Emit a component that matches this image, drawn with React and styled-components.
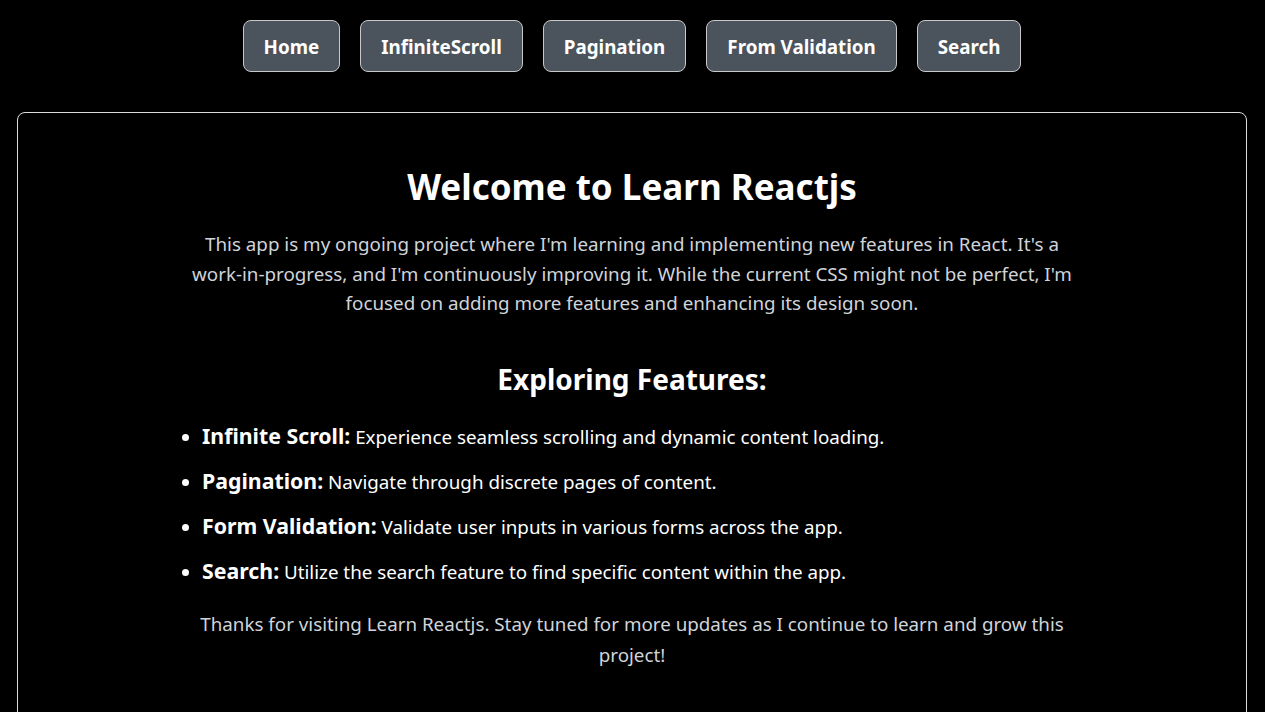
import React from "react";
import styled, { createGlobalStyle } from "styled-components";

const GlobalStyle = createGlobalStyle`
  * {
    box-sizing: border-box;
  }

  body {
    margin: 0;
    background-color: #000;
    color: #fff;
    font-family: "Noto Sans", "Open Sans", sans-serif;
  }
`;

const links = ["Home", "InfiniteScroll", "Pagination", "From Validation", "Search"];

const features = [
  {
    title: "Infinite Scroll:",
    text: "Experience seamless scrolling and dynamic content loading.",
  },
  {
    title: "Pagination:",
    text: "Navigate through discrete pages of content.",
  },
  {
    title: "Form Validation:",
    text: "Validate user inputs in various forms across the app.",
  },
  {
    title: "Search:",
    text: "Utilize the search feature to find specific content within the app.",
  },
];

const App = () => {
  return (
    <>
      <GlobalStyle />
      <Page>
        <Nav>
          {links.map((link) => (
            <NavButton key={link}>{link}</NavButton>
          ))}
        </Nav>

        <Card>
          <Title>Welcome to Learn Reactjs</Title>
          <Intro>
            This app is my ongoing project where I'm learning and implementing
            new features in React. It's a work-in-progress, and I'm
            continuously improving it. While the current CSS might not be
            perfect, I'm focused on adding more features and enhancing its
            design soon.
          </Intro>

          <SubTitle>Exploring Features:</SubTitle>
          <FeatureList>
            {features.map((item) => (
              <FeatureItem key={item.title}>
                <FeatureName>{item.title}</FeatureName> {item.text}
              </FeatureItem>
            ))}
          </FeatureList>

          <Outro>
            Thanks for visiting Learn Reactjs. Stay tuned for more updates as I
            continue to learn and grow this project!
          </Outro>
        </Card>
      </Page>
    </>
  );
};

export default App;

const Page = styled.div`
  padding: 20px 18px 0 17px;
`;

const Nav = styled.nav`
  display: flex;
  justify-content: center;
  gap: 20px;
`;

const NavButton = styled.button`
  height: 52px;
  padding: 2px 20px 0;
  background-color: #4b535c;
  border: 1px solid #c8c8c8;
  border-radius: 8px;
  color: #fff;
  font-family: inherit;
  font-size: 18.8px;
  font-weight: 700;
  cursor: pointer;
`;

const Card = styled.main`
  margin-top: 40px;
  min-height: 640px;
  padding: 50px 20px 30px;
  border: 1px solid #dcdcdc;
  border-radius: 8px;
  text-align: center;
`;

const Title = styled.h1`
  margin: 0 0 20px;
  font-size: 35px;
  font-weight: 700;
`;

const Intro = styled.p`
  max-width: 895px;
  margin: 0 auto;
  color: #d0d4da;
  font-size: 18.8px;
  line-height: 29.5px;
`;

const SubTitle = styled.h2`
  margin: 41px 0 21px;
  font-size: 28px;
  font-weight: 700;
`;

const FeatureList = styled.ul`
  margin: 0;
  padding: 0 0 0 164px;
  text-align: left;
`;

const FeatureItem = styled.li`
  margin-bottom: 10px;
  font-size: 18.8px;
  line-height: 33px;
`;

const FeatureName = styled.strong`
  font-size: 21.3px;
`;

const Outro = styled.p`
  max-width: 880px;
  margin: 20px auto 0;
  color: #d0d4da;
  font-size: 18.8px;
  line-height: 31px;
`;
